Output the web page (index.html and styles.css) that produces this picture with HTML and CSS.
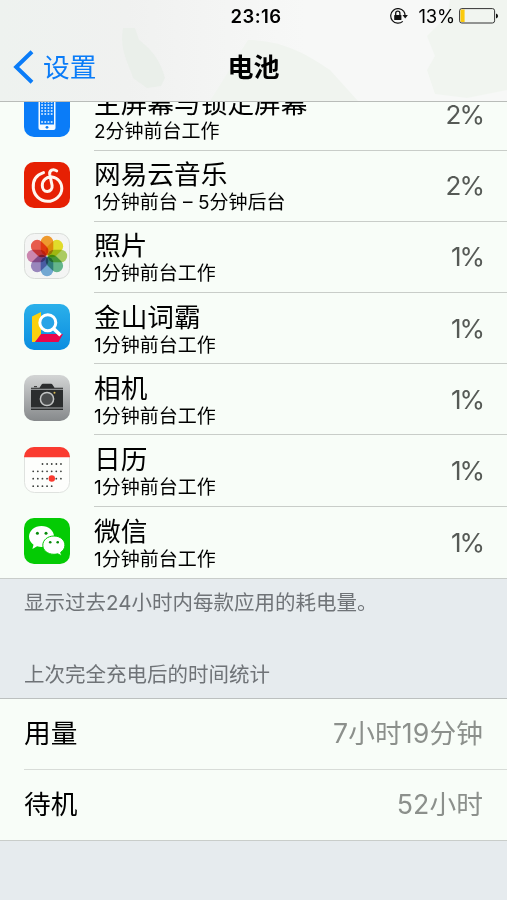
FILE: index.html
```
<!DOCTYPE html>
<html lang="zh-CN">
<head>
  <meta charset="UTF-8" />
  <meta name="viewport" content="width=device-width, initial-scale=1.0"/>
  <title>电池</title>
  <link rel="stylesheet" href="styles.css">
</head>
<body>
  <div class="screen">
    <header class="header">
      <svg class="header-bg" width="507" height="101" viewBox="0 0 507 101">
        <defs>
          <linearGradient id="haze" x1="0" y1="0" x2="1" y2="0">
            <stop offset="0" stop-color="#eef2ef"/>
            <stop offset=".25" stop-color="#f0f1f0"/>
            <stop offset=".6" stop-color="#f7f8f7"/>
            <stop offset="1" stop-color="#f7f8f7"/>
          </linearGradient>
        </defs>
        <rect width="507" height="101" fill="url(#haze)"/>
        <path d="M248 40c35 0 60 15 82 30l28 31H210z" fill="#f0f4ef"/>
        <path d="M450 0h57v90l-40 8-32-4-8-24 8-14-8-20 20-20z" fill="#f1f5f0"/>
        <path d="M123 28l12 0 4 12c16 12 22 24 26 38l-4 8-14 2-14-10c-4-14-14-28-10-50z" fill="#eaefea"/>
      </svg>
      <div class="status-bar">
        <span></span>
        <span class="time">23:16</span>
        <div class="status-right">
          <svg class="lock" width="20" height="16" viewBox="0 0 20 16">
            <path d="M14.8 3.4A7.3 7.3 0 1 0 13.8 13.4" fill="none" stroke="#111" stroke-width="1.2"/>
            <path d="M14.6 3.2Q16 5 16 7.2" fill="none" stroke="#111" stroke-width="1.2"/>
            <path d="M13.5 7h5.4l-2.7 3.4z" fill="#111"/>
            <rect x="5.2" y="7" width="7.2" height="5" rx=".6" fill="#111"/>
            <path d="M6.7 7.2V5.3a2.1 2.1 0 0 1 4.2 0v1.9" fill="none" stroke="#111" stroke-width="1.3"/>
          </svg>
          <span class="percent">13%</span>
          <svg class="battery" width="40" height="16" viewBox="0 0 40 16">
            <rect x=".6" y=".6" width="35" height="14.4" rx="2.2" fill="none" stroke="#333" stroke-width="1"/>
            <path d="M2.4 1.5H5.6V14.1H2.4Q1.5 14 1.5 13V2.5Q1.5 1.6 2.4 1.5z" fill="#fbca0c"/>
            <path d="M37 5.4q2.1.6 2.1 2.5T37 10.4z" fill="#111"/>
          </svg>
        </div>
      </div>
      <nav class="nav">
        <a class="back">
          <svg width="21" height="34" viewBox="0 0 21 34">
            <path d="M19 1.8L3.2 17 19 32.2" fill="none" stroke="#0a7cf8" stroke-width="4"/>
          </svg>
          <span>设置</span>
        </a>
        <h1>电池</h1>
        <span></span>
      </nav>
    </header>

    <main>
      <div class="list apps">
        <div class="app">
          <svg class="icon" viewBox="0 0 46 46">
            <rect width="46" height="46" rx="10" fill="#0a7cf8"/>
            <rect x="14.5" y="4" width="17" height="35" rx="2" fill="#f5fbff"/>
            <rect x="16" y="8" width="14" height="25.5" fill="#0a7cf8"/>
            <path d="M17.200 11h12M17.200 14h12M17.200 17h12M17.200 20h12M17.200 23h12M17.200 31h12" stroke="#f5fbff" stroke-width="1.700" stroke-dasharray="1.700 1.500"/>
            <circle cx="23" cy="36.3" r="1.4" fill="#0a7cf8"/>
          </svg>
          <div class="app-body">
            <div class="app-text">
              <div class="name">主屏幕与锁定屏幕</div>
              <div class="detail">2分钟前台工作</div>
            </div>
            <span class="usage">2%</span>
          </div>
        </div>

        <div class="app">
          <svg class="icon" viewBox="0 0 46 46">
            <rect width="46" height="46" rx="10" fill="#e62003"/>
            <path d="M19.500 10.600C12 13 8.700 19 9.300 26c.7 7.500 6.700 13.300 14.200 13.300S37.800 33.500 37.800 26.500c0-6-3.800-10.600-9.800-11.400-5.500-.7-9.700 3.200-9.700 8.300 0 3.500 1.900 6 5 6s5.300-2.500 4.800-5.900l-2.400-11.300c-.5-3.800 3.300-6 7-3.300" fill="none" stroke="#fff6ef" stroke-width="3" stroke-linecap="round"/>
          </svg>
          <div class="app-body">
            <div class="app-text">
              <div class="name">网易云音乐</div>
              <div class="detail">1分钟前台 – 5分钟后台</div>
            </div>
            <span class="usage">2%</span>
          </div>
        </div>

        <div class="app">
          <svg class="icon" viewBox="0 0 46 46">
            <rect x=".5" y=".5" width="45" height="45" rx="10" fill="#f4f5f4" stroke="#d9dcd9"/>
            <g class="petals">
              <rect x="16.700" y="2.800" width="12.600" height="19.500" rx="6.300" fill="#f9a030"/>
              <rect x="16.700" y="2.800" width="12.600" height="19.500" rx="6.300" fill="#ece52d" transform="rotate(45 23 23)"/>
              <rect x="16.700" y="2.800" width="12.600" height="19.500" rx="6.300" fill="#b3d465" transform="rotate(90 23 23)"/>
              <rect x="16.700" y="2.800" width="12.600" height="19.500" rx="6.300" fill="#68bd91" transform="rotate(135 23 23)"/>
              <rect x="16.700" y="2.800" width="12.600" height="19.500" rx="6.300" fill="#77afdc" transform="rotate(180 23 23)"/>
              <rect x="16.700" y="2.800" width="12.600" height="19.500" rx="6.300" fill="#a08bc5" transform="rotate(225 23 23)"/>
              <rect x="16.700" y="2.800" width="12.600" height="19.500" rx="6.300" fill="#d48bb6" transform="rotate(270 23 23)"/>
              <rect x="16.700" y="2.800" width="12.600" height="19.500" rx="6.300" fill="#f2604f" transform="rotate(315 23 23)"/>
            </g>
          </svg>
          <div class="app-body">
            <div class="app-text">
              <div class="name">照片</div>
              <div class="detail">1分钟前台工作</div>
            </div>
            <span class="usage">1%</span>
          </div>
        </div>

        <div class="app">
          <svg class="icon" viewBox="0 0 46 46">
            <defs>
              <linearGradient id="sky" x1="0" y1="0" x2="0" y2="1">
                <stop offset="0" stop-color="#2bb0ea"/>
                <stop offset="1" stop-color="#0b8de0"/>
              </linearGradient>
            </defs>
            <rect width="46" height="46" rx="10" fill="url(#sky)"/>
            <path d="M8 12.500L17 8v24l-6 6H8z" fill="#fbd00e"/>
            <path d="M11 38l6-8h22l-4.500 8z" fill="#e8064c"/>
            <circle cx="23.800" cy="18.700" r="8" fill="#26a3e7" stroke="#fff" stroke-width="3"/>
            <path d="M29.500 24.500l7 6.700" stroke="#fff" stroke-width="3.600"/>
          </svg>
          <div class="app-body">
            <div class="app-text">
              <div class="name">金山词霸</div>
              <div class="detail">1分钟前台工作</div>
            </div>
            <span class="usage">1%</span>
          </div>
        </div>

        <div class="app">
          <svg class="icon" viewBox="0 0 46 46">
            <defs>
              <linearGradient id="steel" x1="0" y1="0" x2="0" y2="1">
                <stop offset="0" stop-color="#d3d5d5"/>
                <stop offset="1" stop-color="#86898b"/>
              </linearGradient>
            </defs>
            <rect width="46" height="46" rx="10" fill="url(#steel)"/>
            <path d="M7 12.800h8.500l2.300-3.500q.4-.5 1-.5h8.400q.6 0 1 .5l2.300 3.500H39V35H7z" fill="#2b2d2e"/>
            <rect x="10" y="11" width="3" height="1.200" fill="#444"/>
            <path d="M7 14.300h32M7 33h32" stroke="#a8abac" stroke-width="1"/>
            <circle cx="23" cy="24" r="6.600" fill="#4a4c4d" stroke="#c3c5c5" stroke-width="1.500"/>
            <circle cx="30.500" cy="17.800" r="1" fill="#d7b955"/>
          </svg>
          <div class="app-body">
            <div class="app-text">
              <div class="name">相机</div>
              <div class="detail">1分钟前台工作</div>
            </div>
            <span class="usage">1%</span>
          </div>
        </div>

        <div class="app">
          <svg class="icon" viewBox="0 0 46 46">
            <rect x=".5" y=".5" width="45" height="45" rx="10" fill="#fdfefc" stroke="#dfe2df"/>
            <path d="M0 10.300V10A10 10 0 0 1 10 0h26a10 10 0 0 1 10 10v.3z" fill="#fa3b30"/>
            <g stroke="#3c3f3c" stroke-width="1.800" stroke-linecap="round" stroke-dasharray="0 4.620">
              <path d="M18.500 17h19M9.200 24.300h28.300M9.200 31.700h28.300M9.200 39.200h19"/>
            </g>
            <circle cx="27.800" cy="31.500" r="3.200" fill="#fa3b30"/>
          </svg>
          <div class="app-body">
            <div class="app-text">
              <div class="name">日历</div>
              <div class="detail">1分钟前台工作</div>
            </div>
            <span class="usage">1%</span>
          </div>
        </div>

        <div class="app">
          <svg class="icon" viewBox="0 0 46 46">
            <rect width="46" height="46" rx="10" fill="#04cb04"/>
            <path d="M17.500 8C10.500 8 5 12.700 5 18.600c0 3.400 1.700 6.200 4.500 8.100L8.400 31l4.700-2.700c1.400.4 2.800.7 4.400.7C24.500 29 30 24.400 30 18.600S24.500 8 17.500 8z" fill="#fff"/>
            <path d="M30 18c-6.300 0-11.200 4-11.200 9.200S23.700 36.300 30 36.300c1.300 0 2.600-.2 3.800-.5l3.800 2.100-.9-3.600c2.600-1.700 4.200-4.200 4.200-7.100C40.900 22 36.200 18 30 18z" fill="#fff" stroke="#04cb04" stroke-width="1"/>
            <g fill="#078b0a">
              <circle cx="13.400" cy="15.300" r="1.500"/>
              <circle cx="22" cy="15.300" r="1.500"/>
              <circle cx="26.200" cy="24.200" r="1.300"/>
              <circle cx="33.700" cy="24.200" r="1.300"/>
            </g>
          </svg>
          <div class="app-body">
            <div class="app-text">
              <div class="name">微信</div>
              <div class="detail">1分钟前台工作</div>
            </div>
            <span class="usage">1%</span>
          </div>
        </div>
      </div>

      <p class="note">显示过去24小时内每款应用的耗电量。</p>
      <h2 class="section-title">上次完全充电后的时间统计</h2>

      <div class="list stats">
        <div class="stat">
          <span>用量</span>
          <span class="value">7小时19分钟</span>
        </div>
        <div class="stat">
          <span>待机</span>
          <span class="value">52小时</span>
        </div>
      </div>
    </main>
  </div>
</body>
</html>
```
FILE: styles.css
```
* {
  box-sizing: border-box;
  margin: 0;
  padding: 0;
}

body {
  background-color: #e6ebee;
  color: #000;
  font-family: Inter, 'Noto Sans CJK SC', sans-serif;
}

.screen {
  height: 900px;
  display: flex;
  flex-direction: column;
  overflow: hidden;
}

/* header */
.header {
  position: relative;
  flex: none;
  height: 102px;
  background-color: #f6f7f6;
  border-bottom: 1px solid #b9bcb9;
}

.header-bg {
  position: absolute;
  top: 0;
  left: 0;
}

.status-bar {
  position: relative;
  display: grid;
  grid-template-columns: 1fr auto 1fr;
  align-items: center;
  height: 32px;
  padding: 0 8px 0 13px;
}

.time {
  font-size: 18.5px;
  font-weight: 600;
  letter-spacing: 0.4px;
}

.status-right {
  display: flex;
  align-items: center;
  justify-content: flex-end;
}

.percent {
  margin-left: 9px;
  margin-right: 4px;
  font-size: 18.5px;
  letter-spacing: -0.2px;
}

.nav {
  position: relative;
  display: grid;
  grid-template-columns: 1fr auto 1fr;
  align-items: center;
  height: 69px;
  padding: 0 13px;
}

.back {
  display: flex;
  align-items: center;
  gap: 9px;
  color: #0a7cf8;
  font-size: 26.7px;
}

.back span,
h1 {
  padding-bottom: 3px;
}

h1 {
  font-size: 26px;
  font-weight: 600;
}

main {
  flex: 1;
  overflow: hidden;
}

.list {
  background-color: #f8fdf8;
  border-bottom: 1px solid #c9cdca;
}

/* the list is scrolled a little under the header */
.apps {
  margin-top: -22.5px;
}

.app {
  display: flex;
  gap: 24px;
  height: 71.2px;
  padding-left: 24px;
}

.icon {
  flex: none;
  width: 46px;
  height: 46px;
  margin-top: 11.2px;
}

.petals rect {
  mix-blend-mode: multiply;
}

.app-body {
  flex: 1;
  display: flex;
  align-items: center;
  justify-content: space-between;
  padding-right: 24px;
  border-bottom: 1px solid #c9cdc9;
}

.app:last-child .app-body {
  border-bottom: none;
}

.app-text {
  padding-top: 3px;
}

.name {
  height: 31px;
  font-size: 26.7px;
  line-height: 31px;
}

.detail {
  height: 25px;
  font-size: 19px;
  line-height: 26px;
}

.usage {
  color: #565a56;
  font-size: 26px;
  letter-spacing: -2px;
}

.note,
.section-title {
  padding-left: 24px;
  color: #6f7377;
  font-size: 20.5px;
  font-weight: 400;
  line-height: 30px;
}

.note {
  margin-top: 9px;
}

.section-title {
  margin: 42px 0 8px;
}

/* totals since last charge */
.stats {
  border-top: 1px solid #bcc0bf;
}

.stat {
  display: flex;
  align-items: center;
  justify-content: space-between;
  height: 70px;
  margin-left: 24px;
  padding-right: 24px;
  padding-bottom: 5px;
  font-size: 26.7px;
}

.stat + .stat {
  height: 71px;
  border-top: 1px solid #d8dcd8;
}

.value {
  color: #8c908c;
  letter-spacing: 0.1px;
}
```
